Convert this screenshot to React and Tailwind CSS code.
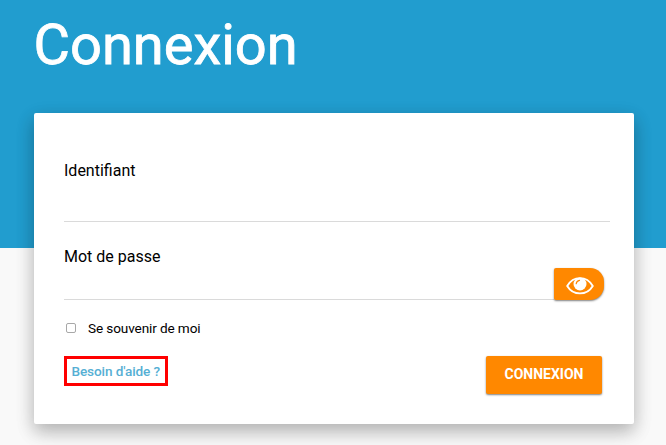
function EyeIcon() {
  return (
    <svg width="28" height="20" viewBox="0 0 28 20" fill="none" aria-hidden="true">
      <path
        d="M1.200 9.900C4.200 4.900 8.800 2.100 14 2.100s9.800 2.800 12.800 7.800c-3 5-7.600 7.500-12.800 7.500S4.200 14.900 1.200 9.900Z"
        stroke="white"
        strokeWidth="1.900"
        strokeLinejoin="round"
      />
      <circle cx="14" cy="8" r="6.500" fill="white" />
      <path d="M10.200 7.700a3.900 3.900 0 0 1 3.300-3.400" stroke="#ff8800" strokeWidth="1.200" strokeLinecap="round" />
    </svg>
  );
}

export default function App() {
  return (
    <div className="h-[445px] w-[666px] overflow-hidden bg-[#f9f9f9] font-[Roboto,sans-serif] text-black">
      <div className="h-full bg-[linear-gradient(#219dcf_248px,transparent_248px)] px-8">
        <h1 className="h-[113px] pl-[1.5px] pt-3 text-[56px] leading-[66px] text-white [-webkit-text-stroke:0.8px_white]">
          Connexion
        </h1>
        <form className="ml-0.5 flex h-[311px] w-[600px] flex-col rounded-[2px] bg-white pl-[30px] pr-6 shadow-[0_8px_17px_0_rgba(0,0,0,0.18),0_6px_20px_0_rgba(0,0,0,0.14)]">
          <div className="h-[109px] border-b border-[#dadada] pt-12 text-base leading-5">Identifiant</div>
          <div className="flex h-[78px] items-end">
            <div className="h-[78px] w-[490px] border-b border-[#dadada] pt-[25px] text-base leading-5">Mot de passe</div>
            <button
              type="button"
              aria-label="Afficher le mot de passe"
              className="flex h-8 w-[50px] items-center justify-center rounded-l-[2px] rounded-r-[14px] bg-[#ff8800] pl-0.5 pt-1 shadow-[0_1px_2px_rgba(0,0,0,0.5)]"
            >
              <EyeIcon />
            </button>
          </div>
          <label className="mt-[18px] flex h-5 items-center text-[13.6px] leading-5 tracking-[-0.12px]">
            <span className="ml-0.5 mr-3 size-2.5 rounded-[2px] border border-[#a8a8a8] bg-white" />
            <span>Se souvenir de moi</span>
          </label>
          <div className="mt-[18px] flex items-start justify-between pr-2">
            <a className="flex h-[30px] w-[104px] items-center whitespace-nowrap border-3 border-[#ff0000] pl-[4.500px] pt-px text-[13.6px] font-medium tracking-[-0.12px] text-[#56afd4]">
              Besoin d'aide ?
            </a>
            <button
              type="button"
              className="h-[38px] w-[116px] rounded-[2px] bg-[#ff8800] pb-0.5 text-sm font-bold text-white shadow-[0_1px_2px_rgba(0,0,0,0.5)]"
            >
              CONNEXION
            </button>
          </div>
        </form>
      </div>
    </div>
  );
}
